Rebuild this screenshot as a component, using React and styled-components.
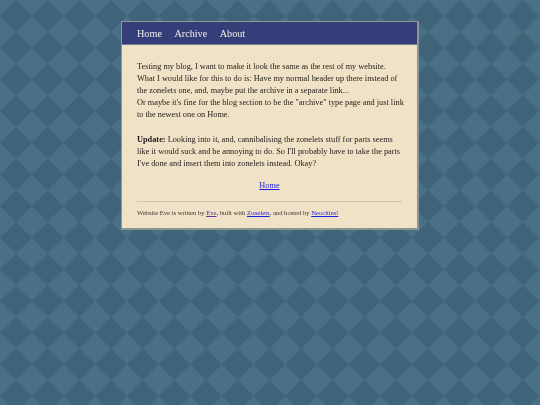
import styled, { createGlobalStyle } from "styled-components";

const Global = createGlobalStyle`
  html, body {
    margin: 0;
    padding: 0;
    height: 100%;
  }
  body {
    background: #4a7085;
    font-family: "Liberation Serif", serif;
  }
`;

const Backdrop = styled.svg`
  position: fixed;
  inset: 0;
  width: 100%;
  height: 100%;
  z-index: -1;
  filter: blur(0.4px);
`;

const Page = styled.div`
  width: 298px;
  margin: 0 auto;
  padding-top: 21px;
`;

const Frame = styled.div`
  border: 1px solid #8a979c;
  border-right: 2px solid #8c9594;
  border-bottom: 2px solid #8c9594;
  background: #f0e2c6;
  filter: blur(0.3px);
`;

const Nav = styled.nav`
  display: flex;
  gap: 12.5px;
  padding: 0 15px;
  height: 22px;
  align-items: center;
  background: #343f7a;
  border-bottom: 1.5px solid #7a7f95;
`;

const NavLink = styled.a`
  color: #f2f0ea;
  font-size: 10.2px;
`;

const Content = styled.main`
  padding: 15.5px 15px 11px 15px;
  color: #1f1b18;
  font-size: 8.3px;
  line-height: 12.2px;
`;

const Para = styled.p`
  margin: 0 0 ${(props) => props.$after}px;
  white-space: nowrap;
`;

const Centered = styled.p`
  margin: 0 0 9px;
  text-align: center;
`;

const Link = styled.a`
  color: ${(props) => (props.$visited ? "#6a2a9b" : "#1c1ce6")};
  text-decoration: underline;
`;

const Footer = styled.footer`
  border-top: 1px solid #cfc3a8;
  padding-top: 5.5px;
  font-size: 6.6px;
  line-height: 9px;
  color: #3a3530;
`;

export default function App() {
  return (
    <>
      <Global />
      <Backdrop aria-hidden="true">
        <defs>
          <pattern id="diamonds" x="0.16" y="0.16" width="31.68" height="31.68" patternUnits="userSpaceOnUse">
            <polygon points="15.84,0 31.68,15.84 15.84,31.68 0,15.84" fill="#3f6378" />
          </pattern>
        </defs>
        <rect width="100%" height="100%" fill="url(#diamonds)" />
      </Backdrop>
      <Page>
        <Frame>
          <Nav>
            <NavLink>Home</NavLink>
            <NavLink>Archive</NavLink>
            <NavLink>About</NavLink>
          </Nav>
          <Content>
            <Para $after={12.2}>
              Testing my blog, I want to make it look the same as the rest of my website.
              <br />
              What I would like for this to do is: Have my normal header up there instead of
              <br />
              the zonelets one, and, maybe put the archive in a separate link...
              <br />
              Or maybe it's fine for the blog section to be the "archive" type page and just link
              <br />
              to the newest one on Home.
            </Para>
            <Para $after={9.5}>
              <strong>Update:</strong> Looking into it, and, cannibalising the zonelets stuff for parts seems
              <br />
              like it would suck and be annoying to do. So I'll probably have to take the parts
              <br />
              I've done and insert them into zonelets instead. Okay?
            </Para>
            <Centered>
              <Link>Home</Link>
            </Centered>
            <Footer>
              Website Eve is written by <Link $visited>Eve</Link>, built with <Link>Zonelets</Link>, and hosted by <Link>Neocities!</Link>
            </Footer>
          </Content>
        </Frame>
      </Page>
    </>
  );
}
